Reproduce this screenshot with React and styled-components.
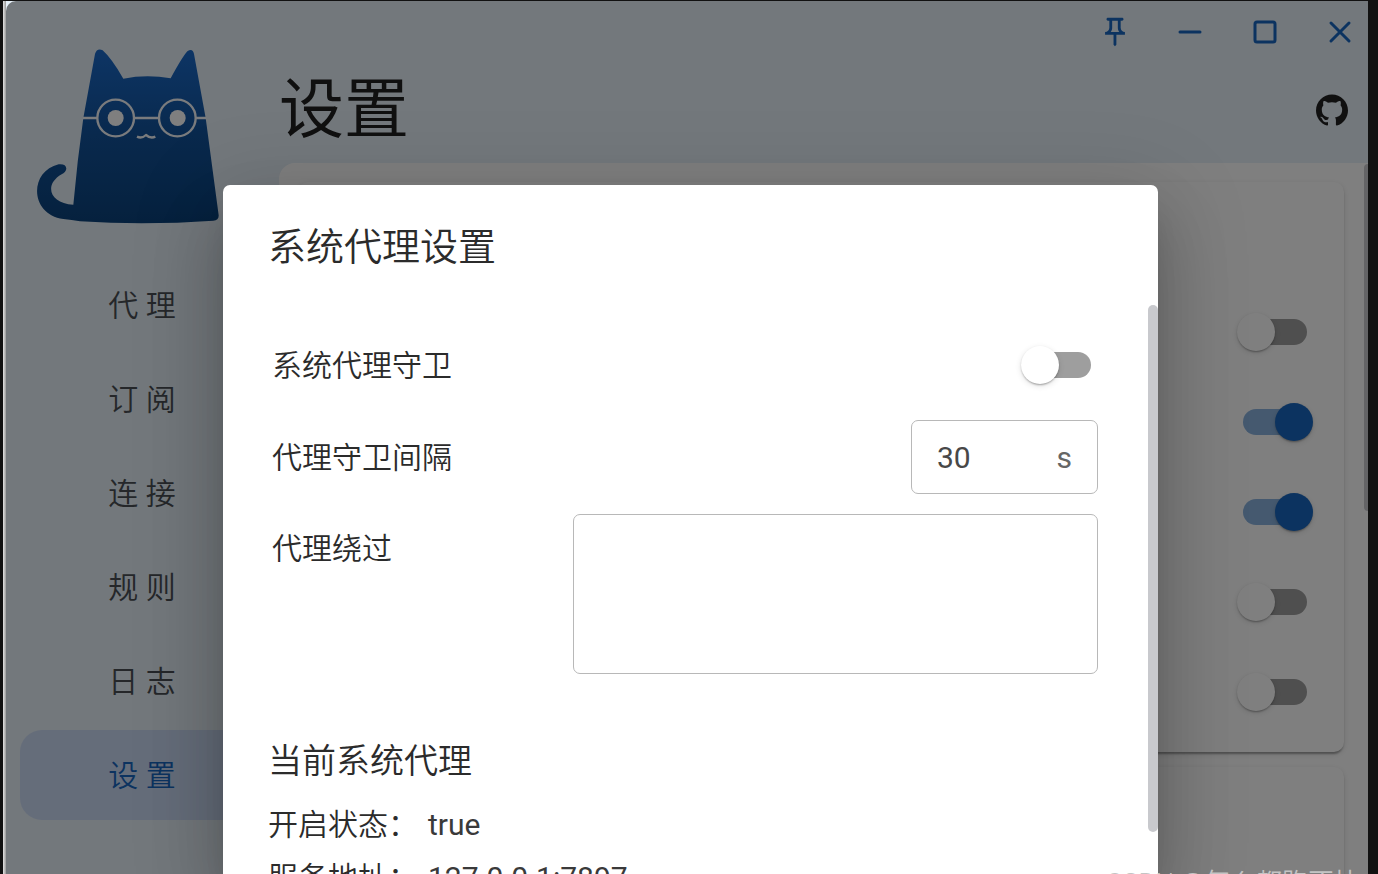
import React, { useState } from 'react';
//Styling
import styled, { createGlobalStyle } from 'styled-components';

const navItems = ['代 理', '订 阅', '连 接', '规 则', '日 志', '设 置'];

const App = () => {
    const [active, setActive] = useState('设 置');
    const [interval, setInterval] = useState('30');
    const [bypass, setBypass] = useState('');

    return (
        <>
            <GlobalStyle />
            <StyledFrame>
                <StyledWindow>
                    <StyledSidebar>
                        <CatLogo />
                        <StyledNav>
                            {navItems.map(item => (
                                <NavButton key={item} $active={item === active} onClick={() => setActive(item)}>
                                    {item}
                                </NavButton>
                            ))}
                        </StyledNav>
                    </StyledSidebar>
                    <StyledMain>
                        <WindowControls />
                        <StyledHeader>
                            <h1>设置</h1>
                            <GithubLink href="#github" aria-label="GitHub">
                                <svg viewBox="0 0 24 24" width="32" height="32" fill="currentColor">
                                    <path d="M12 .297c-6.63 0-12 5.373-12 12 0 5.303 3.438 9.8 8.205 11.385.6.113.82-.258.82-.577 0-.285-.01-1.04-.015-2.04-3.338.724-4.042-1.61-4.042-1.61C4.422 18.07 3.633 17.7 3.633 17.7c-1.087-.744.084-.729.084-.729 1.205.084 1.838 1.236 1.838 1.236 1.07 1.835 2.809 1.305 3.495.998.108-.776.417-1.305.76-1.605-2.665-.3-5.466-1.332-5.466-5.93 0-1.31.465-2.38 1.235-3.22-.135-.303-.54-1.523.105-3.176 0 0 1.005-.322 3.3 1.23.96-.267 1.98-.399 3-.405 1.02.006 2.04.138 3 .405 2.28-1.552 3.285-1.23 3.285-1.23.645 1.653.24 2.873.12 3.176.765.84 1.23 1.91 1.23 3.22 0 4.61-2.805 5.625-5.475 5.92.42.36.81 1.096.81 2.22 0 1.606-.015 2.896-.015 3.286 0 .315.21.69.825.57C20.565 22.092 24 17.592 24 12.297c0-6.627-5.373-12-12-12" />
                                </svg>
                            </GithubLink>
                        </StyledHeader>
                        <StyledPanel>
                            <StyledCard>
                                {[false, true, true, false, false].map((on, i) => (
                                    <CardRow key={i}>
                                        <Switch label={`设置 ${i + 1}`} defaultChecked={on} />
                                    </CardRow>
                                ))}
                            </StyledCard>
                            <StyledCard />
                            <PanelThumb />
                        </StyledPanel>
                    </StyledMain>
                </StyledWindow>
                {/* Dialog */}
                <Backdrop>
                    <StyledDialog role="dialog" aria-labelledby="dialog-title">
                        <h2 id="dialog-title">系统代理设置</h2>
                        <DialogContent>
                            <DialogRow>
                                <span>系统代理守卫</span>
                                <Switch label="系统代理守卫" />
                            </DialogRow>
                            <DialogRow>
                                <label htmlFor="interval">代理守卫间隔</label>
                                <IntervalField>
                                    <input id="interval" value={interval} onChange={e => setInterval(e.target.value)} />
                                    <span>s</span>
                                </IntervalField>
                            </DialogRow>
                            <DialogRow $top>
                                <label htmlFor="bypass">代理绕过</label>
                                <BypassField id="bypass" value={bypass} onChange={e => setBypass(e.target.value)} />
                            </DialogRow>
                            <StyledStatus>
                                <h3>当前系统代理</h3>
                                <p><span>开启状态：</span>true</p>
                                <p><span>服务地址：</span>127.0.0.1:7897</p>
                            </StyledStatus>
                            <DialogThumb />
                        </DialogContent>
                    </StyledDialog>
                </Backdrop>
                <Watermark>CSDN @怎么都跑不快</Watermark>
            </StyledFrame>
        </>
    );
};

const Switch = ({ label, defaultChecked }) => (
    <StyledSwitch>
        <input type="checkbox" aria-label={label} defaultChecked={defaultChecked} />
        <span />
    </StyledSwitch>
);

const WindowControls = () => (
    <StyledControls>
        <button aria-label="置顶">
            <svg viewBox="0 0 24 24" width="34" height="34" fill="currentColor">
                <path d="M14 4v5c0 1.12.37 2.16 1 3H9c.65-.86 1-1.9 1-3V4h4m3-2H7c-.55 0-1 .45-1 1s.45 1 1 1h1v5c0 1.66-1.34 3-3 3v2h5.97v7l1 1 1-1v-7H19v-2c-1.66 0-3-1.34-3-3V4h1c.55 0 1-.45 1-1s-.45-1-1-1z" />
            </svg>
        </button>
        <button aria-label="最小化">
            <ControlIcon><path d="M9 19h20" /></ControlIcon>
        </button>
        <button aria-label="最大化">
            <ControlIcon><rect x="9" y="9" width="20" height="20" rx="2" /></ControlIcon>
        </button>
        <button aria-label="关闭">
            <ControlIcon><path d="M10 10l18 18M28 10l-18 18" /></ControlIcon>
        </button>
    </StyledControls>
);

const CatLogo = () => (
    <StyledLogo viewBox="111 144 549 531">
        <defs>
            <linearGradient id="fur" x1="0" y1="0" x2="0" y2="1">
                <stop offset="0" stopColor="#1b6aca" />
                <stop offset="0.500" stopColor="#12529a" />
                <stop offset="1" stopColor="#0b427c" />
            </linearGradient>
        </defs>
        <path
            fill="url(#fur)"
            d="M220 614Q232 480 250 354L285 162Q291 143 308 151Q334 174 370 236Q440 222 512 235Q546 172 562 154Q578 143 582 162L617 354L656 646Q657 661 640 662Q440 676 240 664Q215 660 190 657C90 645 85 515 176 493Q198 491 199 506Q197 517 185 523C130 555 150 610 220 614Z"
        />
        <g fill="none" stroke="#f4f7fa" strokeWidth="7">
            <circle cx="347" cy="354" r="55" />
            <circle cx="532" cy="354" r="55" />
            <path d="M249 354h43M402 354h75M587 354h32" strokeWidth="8" />
            <path d="M411 410q14 7 27-5q14 12 28 5" strokeLinejoin="round" />
        </g>
        <circle cx="347" cy="354" r="24" fill="#fff" />
        <circle cx="533" cy="354" r="24" fill="#fff" />
    </StyledLogo>
);

const GlobalStyle = createGlobalStyle`
    * {
        box-sizing: border-box;
        margin: 0;
        padding: 0;
    }
    body {
        background: #111;
        color: #2b2b2b;
        font-family: Roboto, "Noto Sans CJK SC", sans-serif;
        font-size: 30px;
        font-weight: 350;
        line-height: 45px;
        overflow: hidden;
    }
    button, input, textarea {
        font: inherit;
        color: inherit;
        border: none;
        background: none;
    }
`

const StyledFrame = styled.div`
    position: relative;
    height: 100vh;
    padding: 1px 10px 0 3px;
    overflow: hidden;
`

const StyledWindow = styled.div`
    display: flex;
    height: 100%;
    padding-left: 3px;
    background: linear-gradient(to right, #e4e4e4, #999 3px, #e6f0f8 3px);
`

const StyledSidebar = styled.aside`
    flex: 0 0 273px;
    padding: 47px 15px 0 14px;
`

const StyledLogo = styled.svg`
    display: block;
    width: 183px;
    height: 177px;
    margin-left: 17px;
`

const StyledNav = styled.nav`
    display: flex;
    flex-direction: column;
    gap: 4px;
    margin-top: 35px;
`

const NavButton = styled.button`
    height: 90px;
    border-radius: 22px;
    color: ${props => props.$active ? '#1867c0' : '#4a4f54'};
    background: ${props => props.$active ? '#cbdaf5' : 'transparent'};
`

const StyledMain = styled.main`
    flex: 1;
    display: flex;
    flex-direction: column;
    min-width: 0;
`

const StyledControls = styled.div`
    display: flex;
    justify-content: flex-end;
    align-items: center;
    gap: 37px;
    height: 62px;
    padding-right: 9px;
    color: #1867c0;
    button {
        display: flex;
        align-items: center;
        justify-content: center;
        width: 38px;
        height: 38px;
    }
`

const ControlIcon = styled.svg.attrs({ viewBox: '0 0 38 38' })`
    width: 38px;
    height: 38px;
    fill: none;
    stroke: currentColor;
    stroke-width: 3;
    stroke-linecap: round;
`

const StyledHeader = styled.header`
    display: flex;
    align-items: center;
    justify-content: space-between;
    height: 100px;
    padding: 0 20px 6px 0;
    h1 {
        color: #212121;
        font-size: 65px;
        font-weight: 400;
        line-height: 80px;
    }
`

const GithubLink = styled.a`
    display: flex;
    color: #212121;
`

const StyledPanel = styled.section`
    position: relative;
    flex: 1;
    display: flex;
    flex-direction: column;
    gap: 15px;
    padding: 19px 24px 0 19px;
    border-top-left-radius: 16px;
    background: #fff;
    overflow: hidden;
`

const StyledCard = styled.div`
    flex-shrink: 0;
    min-height: 200px;
    padding: 105px 37px 15px;
    border-radius: 10px;
    background: #fff;
    box-shadow: 0 4px 2px -2px rgba(0,0,0,0.2), 0 2px 2px rgba(0,0,0,0.14), 0 2px 6px rgba(0,0,0,0.12);
`

const CardRow = styled.div`
    display: flex;
    align-items: center;
    justify-content: flex-end;
    height: 90px;
`

const StyledSwitch = styled.label`
    display: flex;
    align-items: center;
    position: relative;
    width: 64px;
    height: 38px;
    input {
        appearance: none;
        width: 64px;
        height: 26px;
        border-radius: 13px;
        background: #9e9e9e;
    }
    span {
        position: absolute;
        left: -6px;
        width: 38px;
        height: 38px;
        border-radius: 50%;
        background: #fff;
        box-shadow: 0 2px 2px -1px rgba(0,0,0,0.2), 0 1px 2px rgba(0,0,0,0.14), 0 2px 6px rgba(0,0,0,0.12);
    }
    input:checked {
        background: #8bb3df;
    }
    input:checked + span {
        left: 32px;
        background: #1867c0;
    }
`

const Thumb = styled.div`
    position: absolute;
    right: 0;
    background: #c8c9cd;
`

const PanelThumb = styled(Thumb)`
    top: 1px;
    width: 4px;
    height: 347px;
    border-radius: 4px 0 0 4px;
`

const DialogThumb = styled(Thumb)`
    top: 0;
    width: 10px;
    height: 527px;
    border-radius: 5px;
`

const Backdrop = styled.div`
    position: absolute;
    inset: 1px 10px 0 6px;
    display: flex;
    justify-content: center;
    padding: 184px 210px 0 217px;
    border-top-left-radius: 10px;
    background: rgba(0,0,0,0.5);
    overflow: hidden;
`

const StyledDialog = styled.div`
    flex: 1;
    border-radius: 7px 7px 0 0;
    background: #fff;
    box-shadow: 0 20px 28px -13px rgba(0,0,0,0.2), 0 45px 71px 6px rgba(0,0,0,0.14), 0 17px 86px 15px rgba(0,0,0,0.12);
    h2 {
        padding: 32px 45px 28px;
        font-size: 38px;
        font-weight: 350;
        line-height: 60px;
    }
`

const DialogContent = styled.div`
    position: relative;
    padding: 15px 60px 0 45px;
`

const DialogRow = styled.div`
    display: flex;
    align-items: ${props => props.$top ? 'flex-start' : 'center'};
    justify-content: space-between;
    min-height: 90px;
    padding: 10px 0 10px 4px;
    > label:first-child {
        margin-top: ${props => props.$top ? '12px' : '0'};
    }
    ${StyledSwitch} {
        margin-right: 7px;
    }
`

const IntervalField = styled.div`
    display: flex;
    align-items: center;
    width: 187px;
    height: 74px;
    padding: 0 25px;
    border: 1px solid #b8b8b8;
    border-radius: 7px;
    color: #484848;
    font-weight: 400;
    input {
        flex: 1;
        min-width: 0;
    }
    span {
        color: #666;
    }
`

const BypassField = styled.textarea`
    width: 525px;
    height: 160px;
    padding: 16px 24px;
    && {
        border: 1px solid #b8b8b8;
    }
    border-radius: 7px;
    resize: none;
`

const StyledStatus = styled.div`
    display: flex;
    flex-direction: column;
    gap: 8px;
    margin-top: 52px;
    h3 {
        margin-bottom: 8px;
        font-size: 34px;
        font-weight: 350;
        line-height: 50px;
    }
    p {
        display: flex;
        gap: 10px;
        color: #3a3a3a;
        font-weight: 400;
    }
    span {
        color: #2b2b2b;
        font-weight: 350;
    }
`

const Watermark = styled.div`
    position: absolute;
    right: 18px;
    bottom: -24px;
    color: #c4c4c4;
    font-size: 26px;
    line-height: 30px;
`

export default App;
